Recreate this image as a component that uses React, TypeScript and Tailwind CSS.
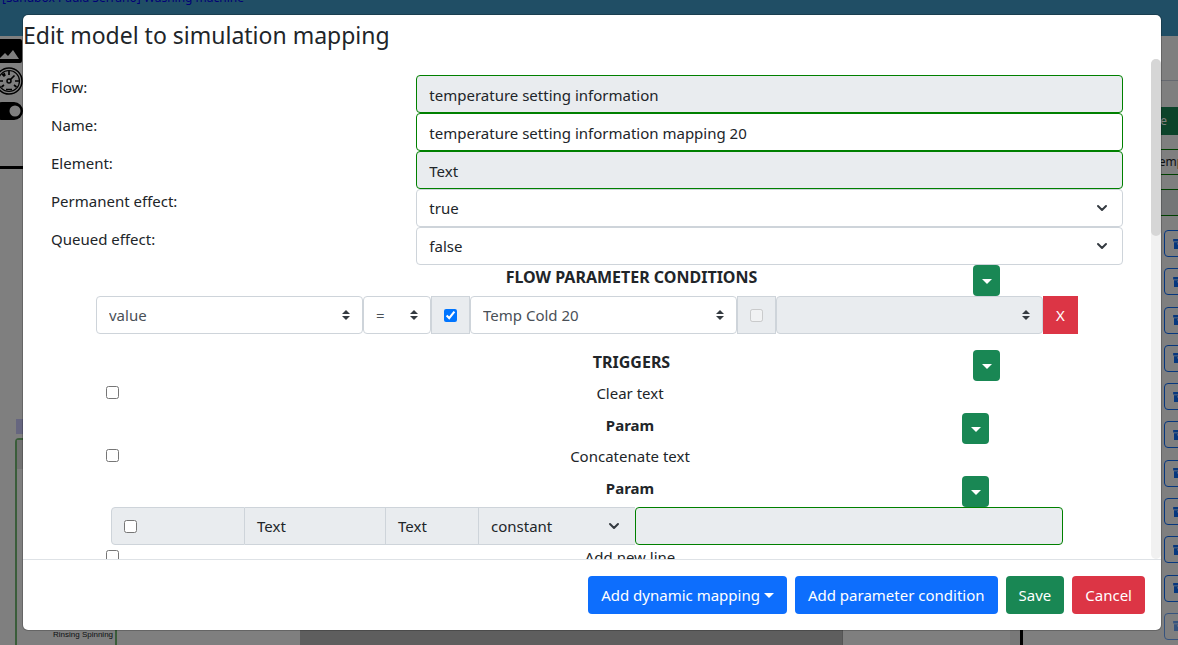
import React from "react";
import { ChevronDown } from "lucide-react";

const CONTROL = "block h-[38px] w-full rounded border px-3 pt-0.5 text-[#212529]";
const READONLY = "border-[green] bg-[#e9ecef]";
const FIELD = "border-[green] bg-white";
const ARCHIVE_ROWS = [0, 1, 2, 3, 4, 5, 6, 7, 8, 9, 10];

function Caret() {
  return (
    <svg viewBox="0 0 10 5" className="h-[5px] w-[10px]" fill="currentColor" aria-hidden="true">
      <path d="M0 0h10L5 5z" />
    </svg>
  );
}

function SortArrows() {
  return (
    <svg viewBox="0 0 4 5" className="pointer-events-none absolute top-[14px] right-[13px] h-[10px] w-2" fill="#343a40" aria-hidden="true">
      <path d="M2 0 0 2h4zm0 5L0 3h4z" />
    </svg>
  );
}

function ToggleButton({ label }: { label: string }) {
  return (
    <button type="button" aria-label={label} className="flex h-[31px] w-[27px] items-center justify-center rounded bg-[#198754] pt-0.5 text-white">
      <Caret />
    </button>
  );
}

function Row({ id, label, children }: { id: string; label: string; children: React.ReactNode }) {
  return (
    <div className="grid grid-cols-[1fr_2fr]">
      <label htmlFor={id} className="px-3">{label}</label>
      <div className="px-3">{children}</div>
    </div>
  );
}

function ChevronSelect({ id, value, options }: { id: string; value: string; options: string[] }) {
  return (
    <div className="relative">
      <select id={id} defaultValue={value} className="block h-[38px] w-full appearance-none rounded border border-[#ced4da] bg-white px-3 text-[#212529]">
        {options.map((o) => <option key={o}>{o}</option>)}
      </select>
      <ChevronDown className="pointer-events-none absolute top-[11px] right-[13px] size-4 text-[#343a40]" strokeWidth={3} />
    </div>
  );
}

function ArrowSelect({ label, value, className, disabled }: { label: string; value: string; className: string; disabled?: boolean }) {
  return (
    <div className={"relative " + className}>
      <select aria-label={label} disabled={disabled} className="block h-[38px] w-full appearance-none rounded border border-[#ced4da] bg-white px-3 text-[#495057] opacity-100 disabled:bg-[#e9ecef]">
        <option>{value}</option>
      </select>
      <SortArrows />
    </div>
  );
}

function Trigger({ name }: { name: string }) {
  return (
    <div className="grid h-8 grid-cols-[259fr_664fr_173fr]">
      <input id={name} type="checkbox" className="mt-[5px] ml-[67px] size-[13px]" />
      <label htmlFor={name} className="text-center">{name}</label>
    </div>
  );
}

function ParamHeading({ label }: { label: string }) {
  return (
    <div className="grid grid-cols-[259fr_664fr_173fr]">
      <h3 className="col-start-2 text-center font-bold">Param</h3>
      <ToggleButton label={label} />
    </div>
  );
}

function SectionHeading({ title }: { title: string }) {
  return (
    <div className="grid grid-cols-[251fr_683fr_162fr]">
      <h3 className="col-start-2 text-center text-base leading-6 font-bold">{title}</h3>
      <ToggleButton label={title} />
    </div>
  );
}

function Editor() {
  return (
    <div className="flex h-screen flex-col overflow-hidden bg-white">
      <header className="h-9 shrink-0 overflow-hidden bg-[#409dca]">
        <div className="h-[6px] bg-[#308ebe]">
          <a href="#model" className="-mt-[11px] ml-0.5 block text-xs leading-[18px] text-[#0000ee]">[Sandbox Paula Serrano] Washing machine</a>
        </div>
      </header>
      <div className="flex min-h-0 flex-1">
        <div className="relative flex-1 overflow-hidden">
          <svg className="absolute top-[3px] -left-1 size-[26px]" viewBox="0 0 26 26" aria-hidden="true">
            <rect width="26" height="24" rx="2" />
            <path d="M3 20l6-6 3 3 5-6 6 9z" fill="#fff" />
          </svg>
          <svg className="absolute top-[31px] -left-[5px] size-7" viewBox="0 0 28 28" fill="none" stroke="#000" aria-hidden="true">
            <circle cx="14" cy="14" r="13" strokeWidth="1.5" />
            <circle cx="14" cy="14" r="10.5" strokeWidth="1.2" />
            <circle cx="14" cy="14" r="2" strokeWidth="1.5" />
            <path d="M15.500 12.500l4-4M14 4v4M4 14h4M20 14h4M7 7l2.500 2.500M6.500 20l2.500-2M21.500 20l-2.500-2M9 6l1 3M11 22.500h6" strokeWidth="1.700" />
          </svg>
          <svg className="absolute top-[66px] -left-[7px] h-[18px] w-[30px]" viewBox="0 0 30 18" aria-hidden="true">
            <rect width="30" height="18" rx="9" />
            <circle cx="22" cy="9" r="5.500" fill="#fff" />
          </svg>
          <div className="absolute top-[130px] left-0 h-[3px] w-full bg-black" />
          <div className="absolute top-[383px] left-4 h-[15px] w-20 bg-[#ccccff]" />
          <div className="absolute top-[402px] bottom-0 left-[15px] w-[102px] rounded-t border-x-2 border-t-2 border-[#74bb74]">
            <div className="h-[29px] bg-[#e4e4e4]" />
          </div>
          <div className="absolute top-[593px] left-[53px] font-['Liberation_Sans',sans-serif] text-[8px] leading-3 whitespace-nowrap">Rinsing Spinning</div>
          <div className="absolute top-[590px] bottom-0 left-[300px] w-[543px] border-r border-[#aaa] bg-[#bcbcbc]" />
          <div className="absolute top-[590px] right-0 bottom-0 w-[10px] bg-[#f1f1f1]" />
        </div>
        <aside className="w-[158px] shrink-0 overflow-hidden border-l-[3px] border-black pt-11">
          <div className="border-t border-[#ccd2e0] pt-[26px]">
            <button type="button" className="block h-7 w-full bg-[#198754] text-right text-xs text-white"><span className="mr-[11px]">Save</span></button>
            <div className="mt-[14px] h-[26px] w-[200px] border border-[green] pl-[129px] text-xs leading-6">Temp</div>
            <div className="mt-[14px] mb-[14px] h-[27px] w-[200px] border border-[green] bg-[#e9ecef]" />
            <ul className="flex h-[410px] flex-col justify-between pl-[141px]">
              {ARCHIVE_ROWS.map((i) => (
                <li key={i} className="h-[27px]">
                  <button type="button" aria-label={"Archive " + (i + 1)} disabled={i === 10} className="flex h-[27px] w-8 items-center rounded border border-[#0d6efd] pl-2 text-[#0d6efd] disabled:opacity-60">
                    <svg viewBox="0 0 14 12" className="h-[10px] w-3 shrink-0" fill="currentColor" aria-hidden="true"><path d="M0 0h14v3H0zM1 4h12v8H1zm4 1v1.500h4V5z" fillRule="evenodd" /></svg>
                  </button>
                </li>
              ))}
            </ul>
          </div>
        </aside>
      </div>
    </div>
  );
}

export default function App() {
  return (
    <div className="relative h-screen overflow-hidden font-['Noto_Sans',sans-serif] text-[15px] leading-6 text-[#212529]">
      <Editor />
      <div className="absolute inset-0 flex bg-black/50 pt-[14px] pr-4 pb-[14px] pl-[22px]">
        <section role="dialog" aria-modal="true" aria-labelledby="dialog-title" className="flex min-w-0 flex-1 flex-col overflow-hidden rounded-md border border-black/20 bg-white bg-clip-padding">
          <h2 id="dialog-title" className="h-11 shrink-0 pt-1 text-[23px] leading-8">Edit model to simulation mapping</h2>
          <div className="flex min-h-0 flex-1">
            <form className="min-w-0 flex-1 overflow-y-auto px-4 pt-4 [scrollbar-width:none]">
              <Row id="flow" label="Flow:"><input id="flow" readOnly defaultValue="temperature setting information" className={CONTROL + " " + READONLY} /></Row>
              <Row id="name" label="Name:"><input id="name" defaultValue="temperature setting information mapping 20" className={CONTROL + " " + FIELD} /></Row>
              <Row id="element" label="Element:"><input id="element" readOnly defaultValue="Text" className={CONTROL + " " + READONLY} /></Row>
              <Row id="permanent" label="Permanent effect:"><ChevronSelect id="permanent" value="true" options={["true", "false"]} /></Row>
              <Row id="queued" label="Queued effect:"><ChevronSelect id="queued" value="false" options={["true", "false"]} /></Row>

              <SectionHeading title="FLOW PARAMETER CONDITIONS" />
              <div className="mb-4 flex px-[57px]">
                <ArrowSelect label="Parameter" value="value" className="flex-1" />
                <ArrowSelect label="Operator" value="=" className="w-[68px]" />
                <span className="flex w-[39px] items-center justify-center border border-[#ced4da] bg-[#e9ecef]"><input type="checkbox" aria-label="Use first value" defaultChecked className="size-[13px]" /></span>
                <ArrowSelect label="First value" value="Temp Cold 20" className="flex-1" />
                <span className="flex w-[39px] items-center justify-center border border-[#ced4da] bg-[#e9ecef]"><input type="checkbox" aria-label="Use second value" disabled className="size-[13px]" /></span>
                <ArrowSelect label="Second value" value="" className="flex-1" disabled />
                <button type="button" className="h-[38px] w-[35px] bg-[#dc3545] text-white">X</button>
              </div>

              <SectionHeading title="TRIGGERS" />
              <Trigger name="Clear text" />
              <ParamHeading label="Clear text parameters" />
              <Trigger name="Concatenate text" />
              <ParamHeading label="Concatenate text parameters" />
              <div className="grid h-[38px] grid-cols-[134fr_141fr_92fr_157fr_428fr] px-[72px]">
                <span className="flex items-center rounded-l border border-[#ced4da] bg-[#e9ecef] pl-3"><input type="checkbox" aria-label="Use text parameter" className="size-[13px]" /></span>
                <span className="flex items-center border-y border-r border-[#ced4da] bg-[#e9ecef] px-3">Text</span>
                <span className="flex items-center border-y border-[#ced4da] bg-[#e9ecef] px-3">Text</span>
                <div className="relative">
                  <select aria-label="Source" className="block h-[38px] w-full appearance-none border border-r-0 border-[#ced4da] bg-[#e9ecef] px-3"><option>constant</option></select>
                  <ChevronDown className="pointer-events-none absolute top-[11px] right-[13px] size-4 text-[#343a40]" strokeWidth={3} />
                </div>
                <input aria-label="Constant value" readOnly className="min-w-0 rounded border border-[green] bg-[#e9ecef] px-3" />
              </div>
              <Trigger name="Add new line" />
            </form>
            <div className="w-[10px] shrink-0 rounded-full bg-[#f1f1f1]" aria-hidden="true">
              <div className="h-[177px] rounded-full bg-[#d6d6d6]" />
            </div>
          </div>
          <footer className="flex shrink-0 justify-end gap-2 border-t border-[#dee2e6] p-4 text-white">
            <button type="button" className="flex h-[38px] items-center gap-1 rounded bg-[#0d6efd] px-[13px]">Add dynamic mapping<Caret /></button>
            <button type="button" className="h-[38px] rounded bg-[#0d6efd] px-[13px]">Add parameter condition</button>
            <button type="button" className="h-[38px] rounded bg-[#198754] px-[13px]">Save</button>
            <button type="button" className="h-[38px] rounded bg-[#dc3545] px-[13px]">Cancel</button>
          </footer>
        </section>
      </div>
    </div>
  );
}
